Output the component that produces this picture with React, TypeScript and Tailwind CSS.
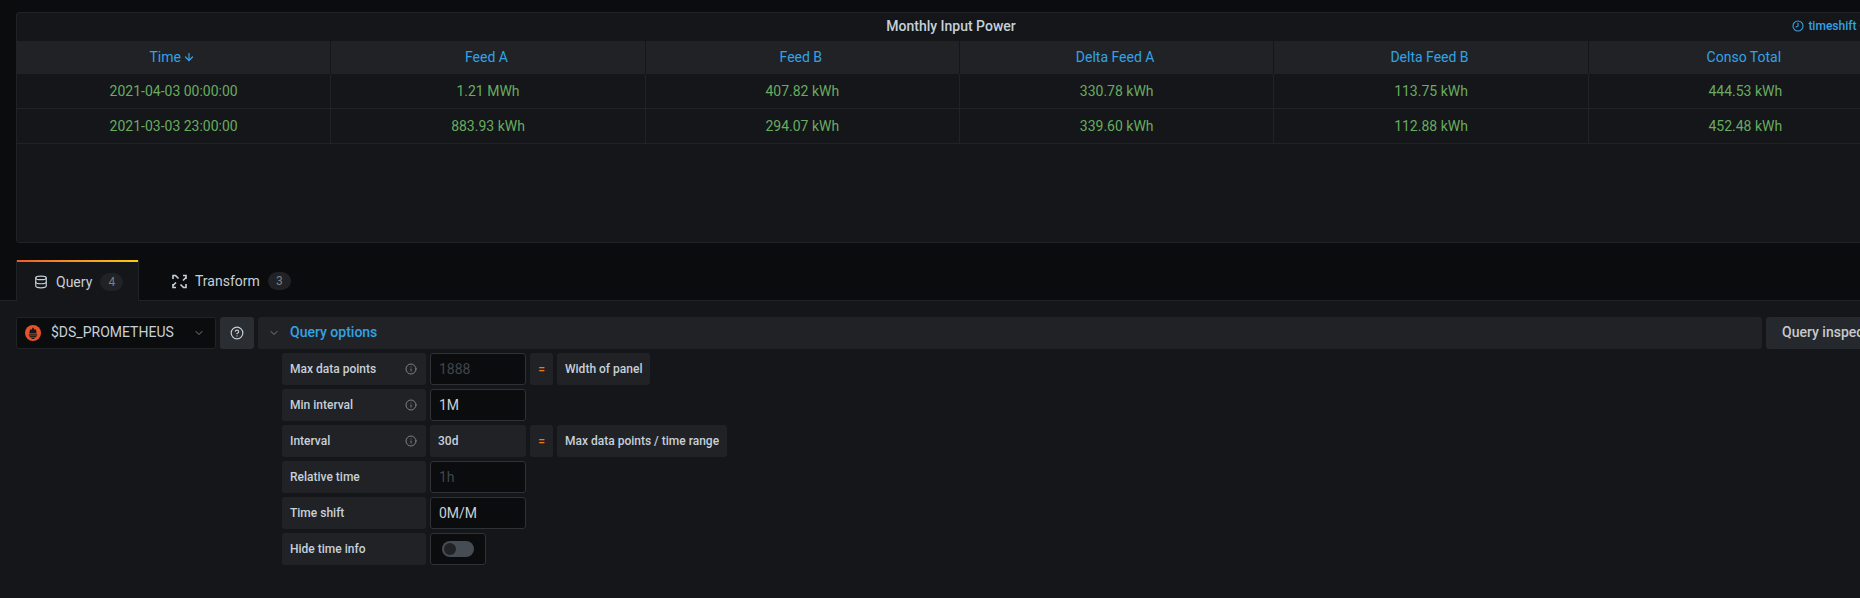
import { ArrowDown, ChevronDown, CircleHelp, Clock, Database, Info } from "lucide-react";

const columns = ["Time", "Feed A", "Feed B", "Delta Feed A", "Delta Feed B", "Conso Total"];
const rows = [
    ["2021-04-03 00:00:00", "1.21 MWh", "407.82 kWh", "330.78 kWh", "113.75 kWh", "444.53 kWh"],
    ["2021-03-03 23:00:00", "883.93 kWh", "294.07 kWh", "339.60 kWh", "112.88 kWh", "452.48 kWh"],
];

const TransformIcon = () => (
    <svg width="15" height="15" viewBox="0 0 15 15" fill="none" stroke="#c7d0d9" strokeWidth="1.6">
        <path d="M1 5V1.500h3M11 1.500h3V5M14 10v3.500h-3M4 13.500H1V10" />
        <path d="M3.500 1.500L6.500 4.500M14 3.500L11 6.500M11.500 13.500L8.500 10.500M1 11.500L4 8.500" />
    </svg>
);

const PrometheusIcon = () => (
    <svg width="16" height="16" viewBox="0 0 16 16">
        <circle cx="8" cy="8" r="8" fill="#e6522c" />
        <path d="M8 2c.4 1.400 1.200 1.700 1.500 3 .5-.3.700-.8.700-1.300 1 1.200 1.500 2.900 1.300 4.800h-7c-.2-1.900.3-3.600 1.300-4.800 0 .5.200 1 .7 1.300C6.800 3.700 7.600 3.400 8 2z" fill="#141619" />
        <rect x="3.800" y="9.300" width="8.400" height="1.300" fill="#141619" />
        <rect x="4.600" y="11.100" width="6.800" height="1.200" fill="#141619" />
        <path d="M6 12.800h4c-.3.800-1 1.200-2 1.200s-1.700-.4-2-1.200z" fill="#141619" />
    </svg>
);

const OptionLabel = ({ text, info }: { text: string; info?: boolean }) => (
    <div className="flex h-8 w-[144px] items-center justify-between rounded-[3px] bg-[#202226] pl-2 pr-[9px] text-xs font-medium text-[#c7d0d9]">
        <span>{text}</span>
        {info && <Info size={12} className="text-[#7b8087]" />}
    </div>
);

const OptionInput = ({ value, placeholder }: { value: string; placeholder?: boolean }) => (
    <div className={`flex h-8 w-[96px] items-center rounded-[3px] border border-[#2c3235] bg-[#0b0c0e] px-2 text-sm ${placeholder ? "text-[#41464d]" : "text-[#c7d0d9]"}`}>
        {value}
    </div>
);

const Equals = ({ text }: { text: string }) => (
    <>
        <div className="flex h-8 w-[23px] items-center justify-center rounded-[3px] bg-[#202226] text-xs font-medium text-[#eb7b18]">=</div>
        <div className="flex h-8 items-center rounded-[3px] bg-[#202226] px-2 text-xs font-medium text-[#c7d0d9]">{text}</div>
    </>
);

const App = () => {
    return (
        <div className="flex h-[598px] w-[1860px] flex-col overflow-hidden bg-[#0b0c0e] font-['Roboto',sans-serif] text-sm text-[#c7d0d9]">
            {/* PANEL */}
            <div className="shrink-0 pl-4 pt-3">
                <div className="h-[231px] w-[1888px] rounded-[3px] border border-[#202226] bg-[#141619]">
                    <div className="grid h-7 w-[1868px] grid-cols-[1fr_auto_1fr] items-center pb-0.5">
                        <span />
                        <span className="font-medium text-[#c7d0d9]">Monthly Input Power</span>
                        <span className="-mr-[11px] flex items-center gap-1 justify-self-end text-xs font-medium text-[#33a2e5]">
                            <Clock size={12} strokeWidth={2.2} className="-scale-x-100" />
                            timeshift -0M/M
                        </span>
                    </div>
                    <div className="grid h-[33px] grid-cols-6 bg-[#202226] text-[#33a2e5]">
                        {columns.map((c) => (
                            <div key={c} className="flex items-center justify-center gap-0.5 border-r border-[#141619] pb-0.5 pr-[3px]">
                                {c}
                                {c === "Time" && <ArrowDown size={12} strokeWidth={2.5} />}
                            </div>
                        ))}
                    </div>
                    {rows.map((row) => (
                        <div key={row[0]} className="grid h-[35px] grid-cols-6 border-b border-[#202226] text-[#69ab60]">
                            {row.map((v, i) => (
                                <div key={i} className="flex items-center justify-center border-r border-[#202226]">{v}</div>
                            ))}
                        </div>
                    ))}
                </div>
            </div>

            {/* TABS */}
            <div className="flex h-[58px] shrink-0 items-end border-b border-[#202226] pl-4">
                <div className="relative -mb-px flex h-[41px] w-[123px] items-center gap-2 border-x border-[#202226] bg-[#141619] pl-[17px] pt-0.5">
                    <div className="absolute inset-x-0 top-0 h-0.5 bg-gradient-to-r from-[#f05a28] to-[#fbca0a]" />
                    <Database size={14} />
                    <span>Query</span>
                    <span className="flex h-[18px] w-[23px] items-center justify-center rounded-full bg-[#202226] text-xs text-[#7b8087]">4</span>
                </div>
                <div className="flex h-10 items-center gap-2 pl-[33px] pt-0.5">
                    <TransformIcon />
                    <span>Transform</span>
                    <span className="flex h-[18px] w-[23px] items-center justify-center rounded-full bg-[#202226] text-xs text-[#7b8087]">3</span>
                </div>
            </div>

            {/* QUERY EDITOR */}
            <div className="flex-1 bg-[#141619] pl-4 pt-4">
                <div className="flex gap-1">
                    <div className="flex h-8 w-[200px] shrink-0 items-center rounded-[3px] border border-[#202226] bg-[#0b0c0e] pl-2 pr-2.5">
                        <PrometheusIcon />
                        <span className="ml-2.5 flex-1 pb-0.5 text-[#c7d0d9]">$DS_PROMETHEUS</span>
                        <ChevronDown size={12} className="text-[#7b8087]" />
                    </div>
                    <div className="flex h-8 w-[34px] shrink-0 items-center justify-center rounded-[3px] bg-[#2a2d32]">
                        <CircleHelp size={14} />
                    </div>
                    <div className="flex h-8 w-[1504px] shrink-0 items-center gap-2.5 rounded-[3px] bg-[#202226] pl-2.5">
                        <ChevronDown size={12} className="text-[#7b8087]" />
                        <span className="pb-0.5 font-medium text-[#33a2e5]">Query options</span>
                    </div>
                    <div className="flex h-8 w-[140px] shrink-0 items-center rounded-[3px] bg-[#25282c] pb-0.5 pl-4 font-medium text-[#c7c9cc]">Query inspector</div>
                </div>

                <div className="ml-[266px] mt-1 flex flex-col gap-1">
                    <div className="flex gap-1">
                        <OptionLabel text="Max data points" info />
                        <OptionInput value="1888" placeholder />
                        <Equals text="Width of panel" />
                    </div>
                    <div className="flex gap-1">
                        <OptionLabel text="Min interval" info />
                        <OptionInput value="1M" />
                    </div>
                    <div className="flex gap-1">
                        <OptionLabel text="Interval" info />
                        <div className="flex h-8 w-[96px] items-center rounded-[3px] bg-[#202226] px-2 text-xs font-medium">30d</div>
                        <Equals text="Max data points / time range" />
                    </div>
                    <div className="flex gap-1">
                        <OptionLabel text="Relative time" />
                        <OptionInput value="1h" placeholder />
                    </div>
                    <div className="flex gap-1">
                        <OptionLabel text="Time shift" />
                        <OptionInput value="0M/M" />
                    </div>
                    <div className="flex gap-1">
                        <OptionLabel text="Hide time info" />
                        <div className="flex h-8 w-[56px] items-center justify-center rounded-[3px] border border-[#2c3235] bg-[#0b0c0e]">
                            <div className="flex h-4 w-8 items-center rounded-full bg-[#464c54] pl-0.5">
                                <div className="h-3 w-3 rounded-full bg-[#202226]" />
                            </div>
                        </div>
                    </div>
                </div>
            </div>
        </div>
    );
};

export default App;
